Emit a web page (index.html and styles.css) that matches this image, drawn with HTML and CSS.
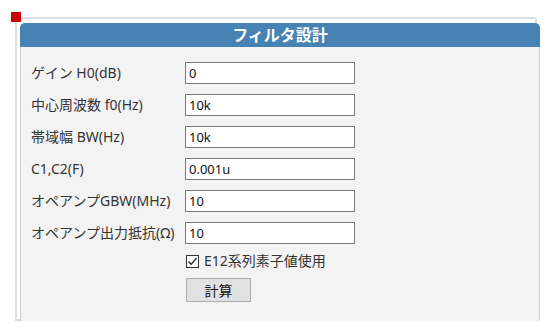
FILE: index.html
```html
<!DOCTYPE html>
<html lang="ja">
<head>
  <meta charset="UTF-8">
  <title>フィルタ設計</title>
  <link rel="stylesheet" href="styles.css">
</head>
<body>
  <div class="frame">
    <span class="marker"></span>
    <div class="panel">
      <div class="panel-title">フィルタ設計</div>
      <div class="form">
        <label class="lbl" for="h0">ゲイン H0(dB)</label>
        <input class="field" type="text" id="h0" value="0">

        <label class="lbl" for="f0">中心周波数 f0(Hz)</label>
        <input class="field" type="text" id="f0" value="10k">

        <label class="lbl" for="bw">帯域幅 BW(Hz)</label>
        <input class="field" type="text" id="bw" value="10k">

        <label class="lbl" for="c">C1,C2(F)</label>
        <input class="field" type="text" id="c" value="0.001u">

        <label class="lbl" for="gbw">オペアンプGBW(MHz)</label>
        <input class="field" type="text" id="gbw" value="10">

        <label class="lbl" for="ro">オペアンプ出力抵抗(Ω)</label>
        <input class="field" type="text" id="ro" value="10">

        <label class="check">
          <span class="box">
            <svg width="11" height="11" viewBox="0 0 11 11"><path d="M1.5 5.5 L4.2 8.3 L9.5 2" fill="none" stroke="#222" stroke-width="1.3"/></svg>
          </span>
          E12系列素子値使用
        </label>

        <button class="btn" type="button">計算</button>
      </div>
    </div>
  </div>
</body>
</html>
```

FILE: styles.css
```css
body {
  margin: 0;
  font-family: "Noto Sans", "Noto Sans CJK JP", sans-serif;
  color: #333;
  background: #fff;
}

.frame {
  position: relative;
  margin: 17px 0 0 15px;
  width: 518px;
  border: 2px solid #dedede;
  border-radius: 0 3px 0 0;
}

.marker {
  position: absolute;
  left: -6px;
  top: -7px;
  width: 10px;
  height: 10px;
  background: #cc0000;
}

.panel {
  margin: 4px -5px -4px 3px;
  background: #f3f3f3;
  border: 1px solid #cfcfcf;
  border-radius: 5px;
}

.panel-title {
  margin: -1px -1px 0;
  height: 24px;
  line-height: 24px;
  background: #4682b4;
  color: #fff;
  font-weight: bold;
  font-size: 16px;
  text-align: center;
  border-radius: 5px 5px 0 0;
}

.form {
  display: grid;
  grid-template-columns: 154px 170px;
  row-gap: 10px;
  align-items: center;
  padding: 15px 0 20px 10px;
}

.lbl {
  font-size: 14px;
  line-height: 22px;
  white-space: nowrap;
}

.field {
  box-sizing: border-box;
  width: 170px;
  height: 22px;
  margin: 0;
  padding: 0 3px;
  border: 1px solid #7a7a7a;
  background: #fff;
  font-family: "Noto Sans", "Noto Sans CJK JP", sans-serif;
  font-size: 13px;
  color: #111;
  outline: none;
}

.check {
  grid-column: 2;
  display: flex;
  align-items: center;
  gap: 5px;
  height: 14px;
  font-size: 14px;
  line-height: 14px;
  margin-left: 1px;
}

.box {
  box-sizing: border-box;
  width: 13px;
  height: 13px;
  border: 1px solid #333;
  background: #fff;
  display: flex;
  align-items: center;
  justify-content: center;
}

.btn {
  grid-column: 2;
  box-sizing: border-box;
  width: 65px;
  height: 24px;
  margin-left: 1px;
  padding: 0;
  background: #e1e1e1;
  border: 1px solid #adadad;
  font-family: "Noto Sans", "Noto Sans CJK JP", sans-serif;
  font-size: 14px;
  color: #111;
}
```
